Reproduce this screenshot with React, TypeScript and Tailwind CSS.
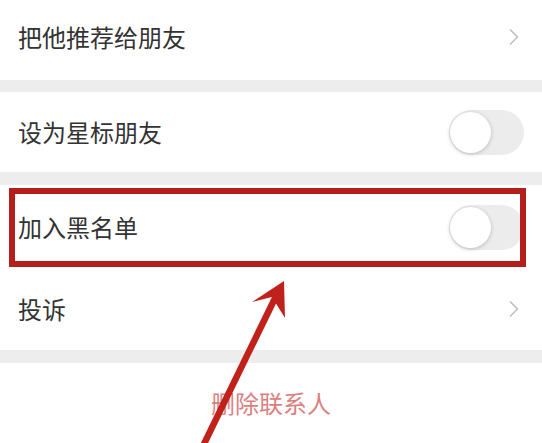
import React from 'react';

const font = { fontFamily: '"Noto Sans CJK SC", "Noto Sans", sans-serif' };

const Chevron = () => (
    <svg width="12" height="20" viewBox="0 0 12 20" className="mr-[2px]">
        <path d="M2 2.5 L9.5 10 L2 17.5" fill="none" stroke="#bdbdbd" strokeWidth="1.5"/>
    </svg>
);

const Toggle = () => (
    <div className="relative w-[75px] h-[45px] rounded-full bg-[#ececec] mr-[-2px]">
        <div className="absolute left-[1px] top-[2px] w-[41px] h-[41px] rounded-full bg-white shadow-[0_1px_4px_rgba(0,0,0,0.22)]"/>
    </div>
);

const Row = ({label, right, h}: { label: string; right: React.ReactNode; h: string }) => (
    <div className={`flex items-center justify-between bg-white pl-[18px] pr-[20px] ${h}`}>
        <span className="text-[24px] text-[#333333] leading-none">{label}</span>
        {right}
    </div>
);

export default function App() {
    return (
        <div className="relative w-[542px] h-[443px] overflow-hidden bg-[#ededed]" style={font}>
            <div className="flex flex-col">
                <Row label="把他推荐给朋友" right={<Chevron/>} h="h-[80px] pb-[6px]"/>
                <div className="h-[12px]"/>
                <Row label="设为星标朋友" right={<Toggle/>} h="h-[80px]"/>
                <div className="h-[13px]"/>
                <Row label="加入黑名单" right={<Toggle/>} h="h-[84px]"/>
                <Row label="投诉" right={<Chevron/>} h="h-[81px] pb-[2px]"/>
                <div className="h-[13px]"/>
                <div className="flex items-center justify-center bg-white h-[80px]">
                    <span className="text-[24px] text-[#da7f80] leading-none">删除联系人</span>
                </div>
            </div>

            <div className="absolute left-[9px] top-[188px] w-[517px] h-[79px] border-[6px] border-[#b41f1b]"/>

            <svg className="absolute left-0 top-0" width="542" height="443" viewBox="0 0 542 443">
                <line x1="203" y1="446" x2="278" y2="292" stroke="#c0211b" strokeWidth="6.5"/>
                <polygon points="284,281 252,302 272,297 285,318" fill="#c0211b"/>
            </svg>
        </div>
    );
}
